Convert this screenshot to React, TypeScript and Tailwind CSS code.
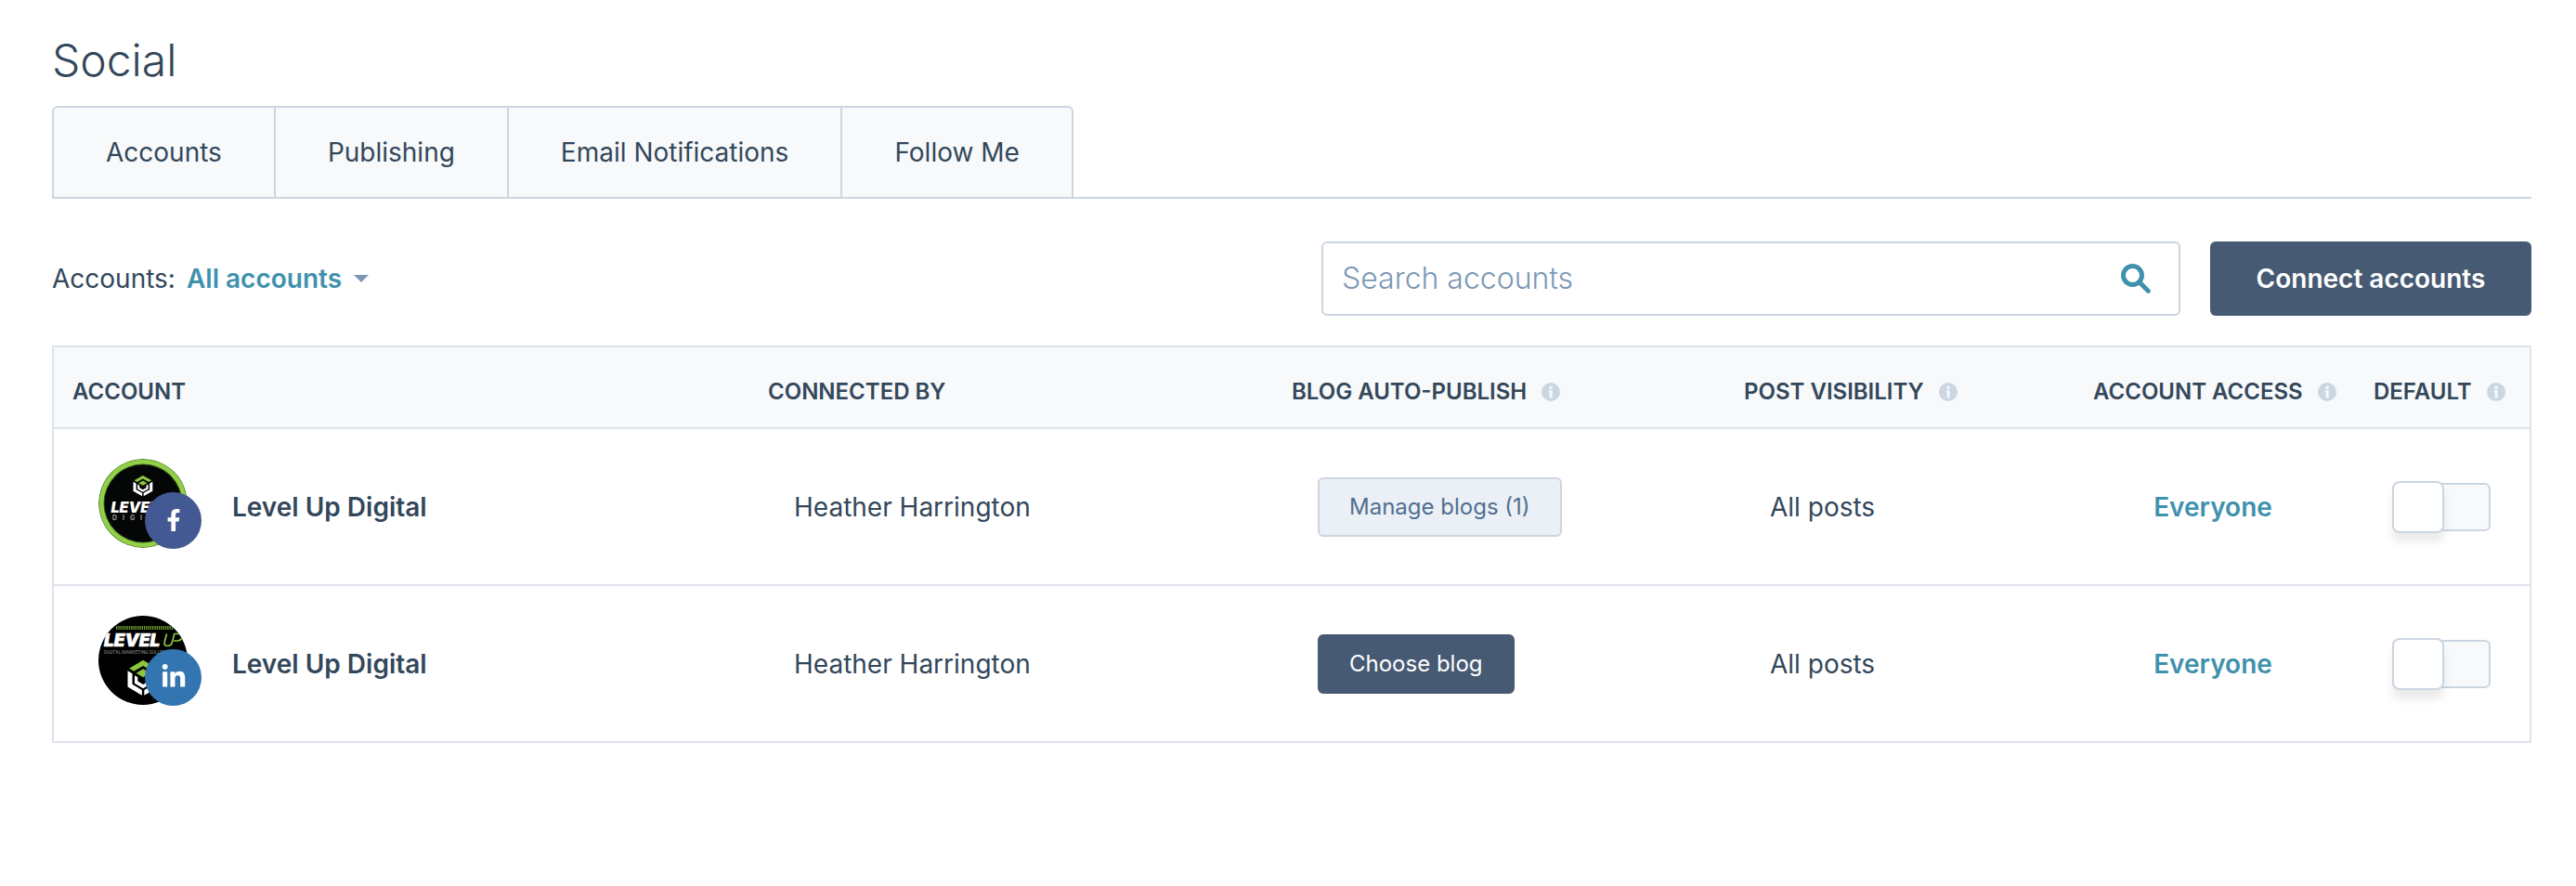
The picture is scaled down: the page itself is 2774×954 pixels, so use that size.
import { useState } from "react";
import type { ReactNode } from "react";
import { FaFacebookF, FaLinkedinIn } from "react-icons/fa";

type Network = "facebook" | "linkedin";

interface Account {
  id: string;
  name: string;
  network: Network;
  connectedBy: string;
  blogs: number;
  visibility: string;
  access: string;
}

const accounts: Account[] = [
  { id: "fb", name: "Level Up Digital", network: "facebook", connectedBy: "Heather Harrington", blogs: 1, visibility: "All posts", access: "Everyone" },
  { id: "li", name: "Level Up Digital", network: "linkedin", connectedBy: "Heather Harrington", blogs: 0, visibility: "All posts", access: "Everyone" },
];

const tabs = ["Accounts", "Publishing", "Email Notifications", "Follow Me"];

function InfoIcon() {
  return (
    <svg viewBox="0 0 20 20" className="ml-4 size-5 shrink-0" aria-hidden="true">
      <circle cx="10" cy="10" r="10" fill="#cbd6e2" />
      <circle cx="10" cy="5.3" r="1.9" fill="#f5f8fa" />
      <path d="M7.6 8.3h4.1v8.2H8.6v-6.2h-1z" fill="#f5f8fa" />
    </svg>
  );
}

function SearchIcon() {
  return (
    <svg viewBox="0 0 32 32" className="size-8" fill="none" stroke="#3f91ad" aria-hidden="true">
      <circle cx="12.5" cy="12.5" r="10" strokeWidth="5" />
      <path d="M20 20l9.3 9.3" strokeWidth="5" strokeLinecap="round" />
    </svg>
  );
}

function CubeMark({ transform }: { transform: string }) {
  return (
    <g transform={transform}>
      <path d="M2 12 20 1l18 11-6 3.600L20 8.500 8 15.600z" fill="#8cc63e" />
      <path d="M20 12.500 29 18l-9 5.500L11 18z" fill="#8cc63e" />
      <path d="M0 15l6 3.600v14l12.500 7.600v7L0 36z M40 15l-6 3.600v14l-12.500 7.600v7L40 36z" fill="#fff" />
      <path d="M9 21l4 2.400v5.400l7 4.200 7-4.200v-5.400l4-2.400v10.500L20 38 9 31.500z" fill="#fff" />
    </g>
  );
}

function FacebookLogo() {
  return (
    <svg viewBox="0 0 96 96" className="size-24 rounded-full" aria-hidden="true">
      <circle cx="48" cy="48" r="48" fill="#5f8a32" />
      <circle cx="48" cy="48" r="47" fill="#92d04a" />
      <circle cx="48" cy="48" r="42.500" fill="#35561c" />
      <circle cx="48" cy="48" r="41.500" fill="#050606" />
      <CubeMark transform="translate(37.500 17.500) scale(.52 .48)" />
      <text x="13.500" y="57.500" fill="#fff" className="font-[Inter] text-[16px] font-black italic">LEVEL</text>
      <g fill="#9a9a9a" className="font-[Inter] text-[7px] font-bold">
        <text x="15" y="65.500">D</text>
        <text x="26" y="65.500">I</text>
        <text x="34" y="65.500">G</text>
        <text x="45" y="65.500">I</text>
      </g>
    </svg>
  );
}

function LinkedinLogo() {
  return (
    <svg viewBox="0 0 96 96" className="size-24 rounded-full" aria-hidden="true">
      <rect width="96" height="96" fill="#000" />
      <path d="M19 13h62" stroke="#6fa02f" strokeWidth="4" strokeDasharray="1.300 1" />
      <text x="6" y="33" fill="#fff" stroke="#fff" strokeWidth=".6" className="font-[Inter] text-[19px] font-black italic">LEVEL</text>
      <path d="M73.500 19.500l-2.300 9c-.8 3 .8 4 3.300 4 2.800 0 4.200-1.300 4.900-4l2.300-9h5c3 0 4 1.300 3.300 3.800-.6 2.500-2.200 3.700-5 3.700h-4" fill="none" stroke="#8cc63e" strokeWidth="1.700" />
      <text x="6" y="41" fill="#8f8f8f" className="font-[Roboto] text-[5px]">DIGITAL MARKETING SOLUTIONS</text>
      <CubeMark transform="translate(31.500 47) scale(.83 .82)" />
    </svg>
  );
}

function Avatar({ network }: { network: Network }) {
  const facebook = network === "facebook";
  return (
    <span className="relative block h-24 w-28 shrink-0">
      {facebook ? <FacebookLogo /> : <LinkedinLogo />}
      <span
        className={`absolute top-9 left-[50px] flex size-[61px] items-center justify-center rounded-full text-white ${
          facebook ? "bg-[#435993]" : "bg-[#3375b1]"
        }`}
      >
        {facebook ? <FaFacebookF size={24} /> : <FaLinkedinIn size={28} />}
      </span>
    </span>
  );
}

function Toggle({ label }: { label: string }) {
  const [on, setOn] = useState(false);
  return (
    <label className="relative inline-flex h-14 w-[106px] cursor-pointer items-center align-middle">
      <input type="checkbox" className="sr-only" aria-label={label} checked={on} onChange={() => setOn(!on)} />
      <span className={`h-[52px] w-full rounded-md border-2 border-[#cbd6e2] ${on ? "bg-[#3f91ad]" : "bg-[#f7f9fa]"}`} />
      <span
        className={`absolute top-0 size-14 rounded-lg border-2 border-[#cbd6e2] bg-white shadow-[0_10px_10px_rgba(0,0,0,0.08)] ${
          on ? "right-0" : "left-0"
        }`}
      />
    </label>
  );
}

function HeadCell({ children, info = false }: { children: ReactNode; info?: boolean }) {
  return (
    <th scope="col" className="h-[88px] border-b-2 border-[#dfe3eb] pt-2.5 pl-[22px] text-left text-2xl font-semibold whitespace-nowrap first:pl-5">
      <span className="flex items-center">
        {children}
        {info && <InfoIcon />}
      </span>
    </th>
  );
}

export default function App() {
  return (
    <main className="min-h-screen bg-white pt-9 pr-12 pb-16 pl-14 font-[Inter,sans-serif] text-[28px] leading-9 font-normal text-[#33475b]">
      <h1 className="text-5xl leading-[58px] font-light">Social</h1>

      <nav className="mt-5 flex border-b-2 border-[#cbd6e2]" aria-label="Social settings">
        {tabs.map((tab) => (
          <a
            key={tab}
            href="#"
            className="flex h-[98px] items-center border-t-2 border-r-2 border-[#cbd6e2] bg-[#f7f9fa] px-14 first:rounded-tl-md first:border-l-2 last:rounded-tr-md"
          >
            {tab}
          </a>
        ))}
      </nav>

      <div className="mt-[46px] flex items-center">
        <label htmlFor="account-filter">Accounts:</label>
        <span className="relative ml-3 flex items-center">
          <select id="account-filter" className="appearance-none bg-transparent pr-7 font-semibold text-[#3f91ad]">
            <option>All accounts</option>
          </select>
          <svg viewBox="0 0 16 8" className="pointer-events-none absolute right-0 h-2 w-4" aria-hidden="true">
            <path d="M0 0h16L8 8z" fill="#7c98b6" />
          </svg>
        </span>
        <div className="ml-auto flex h-20 w-1/3 max-w-[925px] min-w-[400px] grow items-center rounded-md border-2 border-[#cbd6e2] pr-[30px] pl-5">
          <input
            type="search"
            aria-label="Search accounts"
            placeholder="Search accounts"
            className="min-w-0 grow bg-transparent text-[32px] font-light outline-none placeholder:text-[#7c98b6]"
          />
          <button type="button" aria-label="Search">
            <SearchIcon />
          </button>
        </div>
        <button type="button" className="ml-8 h-20 w-[346px] rounded-md bg-[#475a73] font-semibold text-white">
          Connect accounts
        </button>
      </div>

      <div className="mt-8 border-2 border-b-0 border-[#dfe3eb]">
        <table className="w-full table-fixed border-separate border-spacing-0">
          <colgroup>
            <col />
            <col className="w-[564px]" />
            <col className="w-[487px]" />
            <col className="w-[376px]" />
            <col className="w-[302px]" />
            <col className="w-[190px]" />
          </colgroup>
          <thead className="bg-[#f7f9fa]">
            <tr>
              <HeadCell>ACCOUNT</HeadCell>
              <HeadCell>CONNECTED BY</HeadCell>
              <HeadCell info>BLOG AUTO-PUBLISH</HeadCell>
              <HeadCell info>POST VISIBILITY</HeadCell>
              <HeadCell info>ACCOUNT ACCESS</HeadCell>
              <HeadCell info>DEFAULT</HeadCell>
            </tr>
          </thead>
          <tbody>
            {accounts.map((account) => (
              <tr key={account.id} className="[&>td]:h-[169px] [&>td]:border-b-2 [&>td]:border-[#dfe3eb]">
                <td className="pl-12">
                  <div className="flex items-center pb-2">
                    <Avatar network={account.network} />
                    <span className="ml-8 pt-2 font-semibold">{account.name}</span>
                  </div>
                </td>
                <td className="pl-[50px]">{account.connectedBy}</td>
                <td className="pl-[50px]">
                  {account.blogs > 0 ? (
                    <button type="button" className="h-16 rounded-md border-2 border-[#cbd6e2] bg-[#eaf0f5] px-8 text-2xl text-[#516f90]">
                      Manage blogs ({account.blogs})
                    </button>
                  ) : (
                    <button type="button" className="h-16 rounded-md border-2 border-[#475a73] bg-[#475a73] px-8 text-2xl text-white">
                      Choose blog
                    </button>
                  )}
                </td>
                <td className="pl-[50px]">{account.visibility}</td>
                <td className="text-center">
                  <button type="button" className="font-semibold text-[#3f91ad]">
                    {account.access}
                  </button>
                </td>
                <td className="text-center">
                  <Toggle label={`Default ${account.network} account`} />
                </td>
              </tr>
            ))}
          </tbody>
        </table>
      </div>
    </main>
  );
}
